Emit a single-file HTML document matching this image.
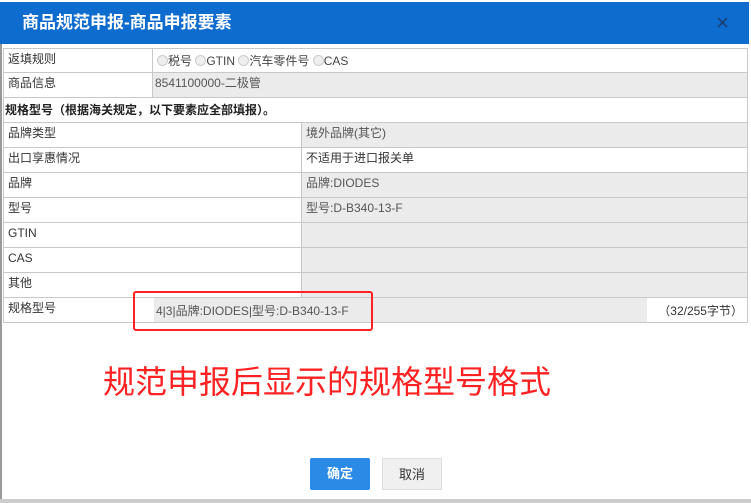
<!DOCTYPE html>
<html><head><meta charset="utf-8"><style>
*{margin:0;padding:0;box-sizing:border-box}
body{width:751px;height:503px;background:#fff;position:relative;overflow:hidden;font-family:"Liberation Sans","Noto Sans CJK SC",sans-serif;font-size:12px;color:#333}
.hd{position:absolute;left:0;top:2px;width:749px;height:42px;background:#0f6ccf;color:#fff;font-weight:bold;font-size:17px;line-height:42px;padding-left:22px}
.x{position:absolute;right:20px;top:0;color:#1a3d6e;font-weight:normal;font-size:22px}
.frame{position:absolute;left:0;top:44px;width:2px;height:456px;background:#999}
.bottom{position:absolute;left:0;top:499px;width:751px;height:4px;background:#ccc}
.r{position:absolute;left:3px;width:745px;height:25px;border:1px solid #c8c8c8;border-top:none}
.r div{position:absolute;top:0;height:24px;line-height:20px;padding-left:4px}
.g{background:#ebebeb;color:#555}
.rad{display:inline-block;width:11px;height:11px;border-radius:50%;border:1px solid #ccc;background:#eee;vertical-align:-1px}
.red{position:absolute;left:133px;top:291px;width:240px;height:40px;border:2px solid #f22;border-radius:3px}
.big{position:absolute;left:103px;top:357px;font-size:32px;color:#f22;white-space:nowrap}
.btn{position:absolute;top:458px;width:60px;height:32px;line-height:32px;text-align:center;font-size:13px}
</style></head><body>
<div class="hd">商品规范申报-商品申报要素<span class="x">×</span></div>
<div class="frame"></div>
<div class="r" style="top:48px;border-top:1px solid #c8c8c8"><div style="left:0;width:149px;border-right:1px solid #c8c8c8">返填规则</div><div style="left:149px;color:#444;line-height:24px"><span class="rad"></span>税号 <span class="rad"></span>GTIN <span class="rad"></span>汽车零件号 <span class="rad"></span>CAS</div></div>
<div class="r" style="top:73px"><div style="left:0;width:149px;border-right:1px solid #c8c8c8">商品信息</div><div class="g" style="left:149px;right:0;padding-left:2px">8541100000-二极管</div></div>
<div class="r" style="top:98px"><div style="left:0;font-weight:bold;color:#222;padding-left:1px;line-height:24px">规格型号（根据海关规定，以下要素应全部填报）。</div></div>
<div class="r" style="top:123px"><div style="left:0;width:298px;border-right:1px solid #c8c8c8">品牌类型</div><div class="g" style="left:298px;right:0">境外品牌(其它)</div></div>
<div class="r" style="top:148px"><div style="left:0;width:298px;border-right:1px solid #c8c8c8">出口享惠情况</div><div style="left:298px;right:0">不适用于进口报关单</div></div>
<div class="r" style="top:173px"><div style="left:0;width:298px;border-right:1px solid #c8c8c8">品牌</div><div class="g" style="left:298px;right:0">品牌:DIODES</div></div>
<div class="r" style="top:198px"><div style="left:0;width:298px;border-right:1px solid #c8c8c8">型号</div><div class="g" style="left:298px;right:0">型号:D-B340-13-F</div></div>
<div class="r" style="top:223px"><div style="left:0;width:298px;border-right:1px solid #c8c8c8">GTIN</div><div class="g" style="left:298px;right:0"></div></div>
<div class="r" style="top:248px"><div style="left:0;width:298px;border-right:1px solid #c8c8c8">CAS</div><div class="g" style="left:298px;right:0"></div></div>
<div class="r" style="top:273px"><div style="left:0;width:298px;border-right:1px solid #c8c8c8">其他</div><div class="g" style="left:298px;right:0"></div></div>
<div class="r" style="top:298px"><div style="left:0;width:149px">规格型号</div><div class="g" style="left:150px;width:493px;padding-left:2px;line-height:26px">4|3|品牌:DIODES|型号:D-B340-13-F</div><div style="right:4px;line-height:26px">（32/255字节）</div></div>
<div class="red"></div>
<div class="big">规范申报后显示的规格型号格式</div>
<div class="btn" style="left:310px;background:#2b8ae6;color:#fff;font-weight:bold;border-radius:2px">确定</div>
<div class="btn" style="left:382px;background:#f0f0f0;border:1px solid #ddd;color:#333">取消</div>
<div class="bottom"></div>
</body></html>
